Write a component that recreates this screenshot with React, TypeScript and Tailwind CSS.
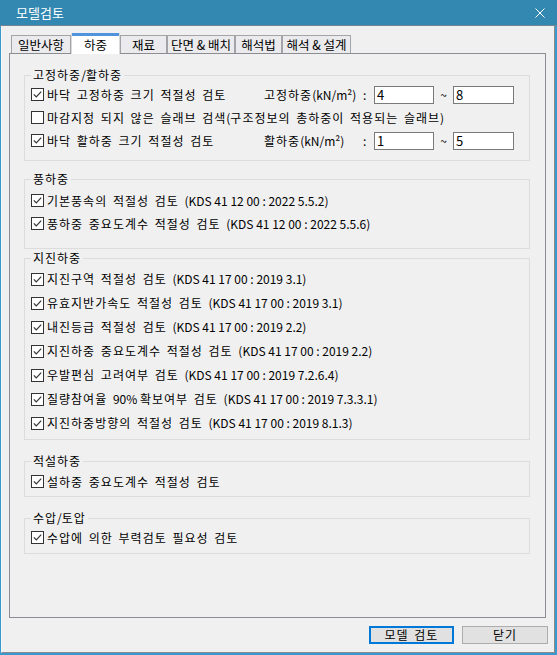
import React from "react";

const isHangul = (c: string) => /[\uac00-\ud7a3]/.test(c);

function Txt({ s }: { s: string }) {
  const runs: { t: string; h: boolean }[] = [];
  let prev = "";
  for (const c of s) {
    const h = isHangul(c) || (c === " " && prev !== "" && isHangul(prev));
    const last = runs[runs.length - 1];
    if (last && last.h === h) last.t += c;
    else runs.push({ t: c, h });
    prev = c;
  }
  return (
    <span className="whitespace-pre">
      {runs.map((r, i) =>
        r.h ? (
          <span key={i} className="tracking-[1px] [word-spacing:2px]">
            {r.t}
          </span>
        ) : (
          <span key={i}>{r.t}</span>
        )
      )}
    </span>
  );
}

function Check({ checked = true }: { checked?: boolean }) {
  return (
    <svg width="13" height="13" viewBox="0 0 13 13" className="shrink-0">
      <rect x="0.5" y="0.5" width="12" height="12" fill="#ffffff" stroke="#333333" />
      {checked && (
        <path d="M2.8 6.3 L5.3 8.9 L10.2 3.6" fill="none" stroke="#333333" strokeWidth="1.2" />
      )}
    </svg>
  );
}

function Group({
  title,
  className,
  children,
}: {
  title: string;
  className: string;
  children: React.ReactNode;
}) {
  return (
    <div className={"relative ml-[14px] mr-[15px] border border-[#dcdcdc] pl-[6px] " + className}>
      <span className="absolute left-[6px] top-[-8px] bg-[#f0f0f0] px-[2px] leading-[14px]">
        <Txt s={title} />
      </span>
      {children}
    </div>
  );
}

function Row({ text, checked = true, h = "h-[23px]" }: { text: string; checked?: boolean; h?: string }) {
  return (
    <div className={"flex items-center " + h}>
      <Check checked={checked} />
      <span className="ml-[3px]">
        <Txt s={text} />
      </span>
    </div>
  );
}

function Field({ v, w }: { v: string; w: string }) {
  return (
    <div className={"h-[18px] border border-[#7a7a7a] bg-white pl-[2px] text-[13px] leading-[16px] " + w}>{v}</div>
  );
}

function LoadRow({ label, name, a, b }: { label: string; name: string; a: string; b: string }) {
  return (
    <div className="flex h-[23px] items-center">
      <div className="flex w-[233px] items-center">
        <Check />
        <span className="ml-[3px]">
          <Txt s={label} />
        </span>
      </div>
      <span className="w-[99px]">
        <Txt s={name} />
      </span>
      <span className="w-[11px]">:</span>
      <Field v={a} w="w-[60px]" />
      <span className="w-[19px] text-center">~</span>
      <Field v={b} w="w-[61px]" />
    </div>
  );
}

const tabs = ["일반사항", "하중", "재료", "단면 & 배치", "해석법", "해석 & 설계"];
const tabW = ["w-[60px]", "w-[49px]", "w-[47px]", "w-[68px]", "w-[47px]", "w-[69px]"];

export default function App() {
  return (
    <div className="flex h-[655px] w-[557px] flex-col bg-[#f0f0f0] font-['Noto_Sans_CJK_KR',sans-serif] text-[12px] text-black">
      {/* title bar */}
      <div className="flex h-[26px] shrink-0 items-center justify-between border-b border-[#6f8794] bg-[#3288b1] pl-[16px] pr-[12px]">
        <span className="text-[13px] leading-[14px] text-white">모델검토</span>
        <svg width="10" height="10" viewBox="0 0 10 10">
          <path d="M0.5 0.5 L9.5 9.5 M9.5 0.5 L0.5 9.5" stroke="#ffffff" strokeWidth="1" />
        </svg>
      </div>
      {/* body */}
      <div className="flex flex-1 flex-col border-b-2 border-l border-r-2 border-[#3a9ad0]">
        <div className="flex flex-1 flex-col border-b border-l border-r border-b-[#8a8a8a] border-l-[#f7f7f7] border-r-[#8a8a8a] pl-[7px] pr-[8px] pt-[7px]">
          {/* tabs */}
          <div className="flex h-[20px] items-end pl-[2px] text-[12.5px]">
            {tabs.map((t, i) =>
              i === 1 ? (
                <div
                  key={t}
                  className={
                    "relative z-10 -mb-[1px] flex h-[21px] flex-col border-x border-[#d9d9d9] bg-white " + tabW[i]
                  }
                >
                  <div className="h-[3px] bg-[#4f94dc]" />
                  <div className="flex flex-1 items-center justify-center leading-[14px]">{t}</div>
                </div>
              ) : (
                <div
                  key={t}
                  className={
                    "flex h-[18px] items-center justify-center border-x border-t border-[#a3a3a8] bg-[#ebebed] leading-[14px] " +
                    tabW[i]
                  }
                >
                  {t}
                </div>
              )
            )}
          </div>
          {/* panel */}
          <div className="flex h-[565px] flex-col border border-[#8c8c93]">
            <Group title="고정하중/활하중" className="mt-[21px] pb-[8px] pt-[7px]">
              <LoadRow label="바닥 고정하중 크기 적절성 검토" name="고정하중(kN/m²)" a="4" b="8" />
              <Row text="마감지정 되지 않은 슬래브 검색(구조정보의 총하중이 적용되는 슬래브)" checked={false} />
              <LoadRow label="바닥 활하중 크기 적절성 검토" name="활하중(kN/m²)" a="1" b="5" />
            </Group>

            <Group title="풍하중" className="mt-[18px] pb-[13px] pt-[9px]">
              <Row text="기본풍속의 적절성 검토 (KDS 41 12 00 : 2022 5.5.2)" />
              <Row text="풍하중 중요도계수 적절성 검토 (KDS 41 12 00 : 2022 5.5.6)" />
            </Group>

            <Group title="지진하중" className="mt-[9px] pb-[4px] pt-[8px]">
              <Row h="h-[24px]" text="지진구역 적절성 검토 (KDS 41 17 00 : 2019 3.1)" />
              <Row h="h-[24px]" text="유효지반가속도 적절성 검토 (KDS 41 17 00 : 2019 3.1)" />
              <Row h="h-[24px]" text="내진등급 적절성 검토 (KDS 41 17 00 : 2019 2.2)" />
              <Row h="h-[24px]" text="지진하중 중요도계수 적절성 검토 (KDS 41 17 00 : 2019 2.2)" />
              <Row h="h-[24px]" text="우발편심 고려여부 검토 (KDS 41 17 00 : 2019 7.2.6.4)" />
              <Row h="h-[24px]" text="질량참여율 90% 확보여부 검토 (KDS 41 17 00 : 2019 7.3.3.1)" />
              <Row h="h-[24px]" text="지진하중방향의 적절성 검토 (KDS 41 17 00 : 2019 8.1.3)" />
            </Group>

            <Group title="적설하중" className="mt-[21px] pb-[3px] pt-[8px]">
              <Row text="설하중 중요도계수 적절성 검토" />
            </Group>

            <Group title="수압/토압" className="mt-[21px] pb-[4px] pt-[7px]">
              <Row text="수압에 의한 부력검토 필요성 검토" />
            </Group>
          </div>
          {/* buttons */}
          <div className="mt-[8px] flex justify-end gap-[8px]">
            <div className="flex h-[18px] w-[85px] items-center justify-center border-2 border-[#0078d7] bg-[#e1e1e1] leading-[14px]">
              <Txt s="모델 검토" />
            </div>
            <div className="-mr-[2px] flex h-[18px] w-[86px] items-center justify-center border border-[#adadad] bg-[#e1e1e1] leading-[14px]">
              <Txt s="닫기" />
            </div>
          </div>
        </div>
      </div>
    </div>
  );
}
